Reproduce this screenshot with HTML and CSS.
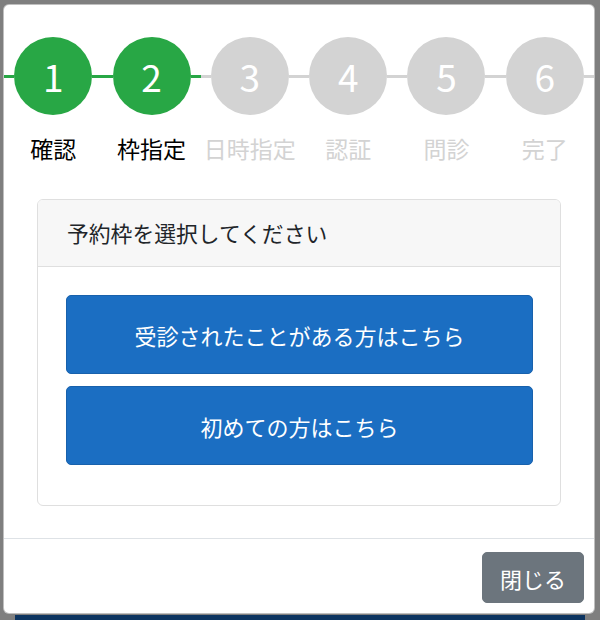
FILE: index.html
```html
<!DOCTYPE html>
<html lang="ja">
<head>
<meta charset="utf-8">
<title>予約</title>
<link rel="stylesheet" href="styles.css">
</head>
<body>
<div class="page">
  <div class="modal">
    <div class="modal-body">
      <ol class="steps">
        <li class="step done">
          <div class="step-track"><span class="line"></span><span class="circle">1</span><span class="line"></span></div>
          <div class="step-label">確認</div>
        </li>
        <li class="step done">
          <div class="step-track"><span class="line"></span><span class="circle">2</span><span class="line"></span></div>
          <div class="step-label">枠指定</div>
        </li>
        <li class="step">
          <div class="step-track"><span class="line"></span><span class="circle">3</span><span class="line"></span></div>
          <div class="step-label">日時指定</div>
        </li>
        <li class="step">
          <div class="step-track"><span class="line"></span><span class="circle">4</span><span class="line"></span></div>
          <div class="step-label">認証</div>
        </li>
        <li class="step">
          <div class="step-track"><span class="line"></span><span class="circle">5</span><span class="line"></span></div>
          <div class="step-label">問診</div>
        </li>
        <li class="step">
          <div class="step-track"><span class="line"></span><span class="circle">6</span><span class="line"></span></div>
          <div class="step-label">完了</div>
        </li>
      </ol>
      <div class="card">
        <div class="card-header">予約枠を選択してください</div>
        <div class="card-body">
          <button class="btn btn-primary">受診されたことがある方はこちら</button>
          <button class="btn btn-primary">初めての方はこちら</button>
        </div>
      </div>
    </div>
    <div class="modal-footer">
      <button class="btn btn-secondary">閉じる</button>
    </div>
  </div>
  <div class="page-bar"></div>
</div>
</body>
</html>
```
FILE: styles.css
```css
* { box-sizing: border-box; }
html, body {
  margin: 0;
  padding: 0;
  height: 620px;
  overflow: hidden;
}
body {
  background: #7f7f7f;
  font-family: "Noto Sans CJK JP", "Noto Sans", sans-serif;
  color: #212529;
}
.page {
  padding: 4px 5px 0 3px;
}
.modal {
  width: 592px;
  height: 610px;
  background: #fff;
  border: 1px solid rgba(0, 0, 0, 0.25);
  border-radius: 6px;
  display: flex;
  flex-direction: column;
  overflow: hidden;
}
.modal-body {
  flex: 1;
  padding: 32px 0 0;
}
.steps {
  list-style: none;
  margin: 0;
  padding: 0;
  display: flex;
}
.step {
  flex: 1;
  display: flex;
  flex-direction: column;
  align-items: stretch;
}
.step-track {
  display: flex;
  align-items: center;
}
.line {
  flex: 1;
  height: 3px;
  background: #d3d3d3;
}
.circle {
  width: 78px;
  height: 78px;
  border-radius: 50%;
  background: #d3d3d3;
  color: #fff;
  font-size: 37px;
  line-height: 78px;
  text-align: center;
}
.step-label {
  margin-top: 19px;
  text-align: center;
  font-size: 23px;
  line-height: 28px;
  color: #d3d3d3;
}
.step.done .line,
.step.done .circle {
  background: #28a745;
}
.step.done .step-label {
  color: #000;
}
.card {
  margin: 37px 33px 0;
  border: 1px solid #dfdfdf;
  border-radius: 6px;
  overflow: hidden;
}
.card-header {
  height: 67px;
  padding: 0 29px;
  background: #f7f7f7;
  border-bottom: 1px solid #dfdfdf;
  font-size: 21.8px;
  line-height: 66px;
  color: #212529;
}
.card-body {
  padding: 28px 27px 40px 28px;
  display: flex;
  flex-direction: column;
  gap: 12px;
}
.btn {
  font-family: inherit;
  font-size: 22px;
  color: #fff;
  border-radius: 5px;
  cursor: pointer;
}
.btn-primary {
  height: 79px;
  width: 100%;
  background: #1b6ec2;
  border: 1px solid #1861ac;
}
.modal-footer {
  border-top: 1px solid #dee2e6;
  padding: 13px 10px 10px;
  display: flex;
  justify-content: flex-end;
}
.btn-secondary {
  height: 51px;
  padding: 0 17px;
  background: #6c757d;
  border: 1px solid #6c757d;
}
.page-bar {
  margin: 1px 10px 0 12px;
  height: 6px;
  background: #0c3460;
}
```
